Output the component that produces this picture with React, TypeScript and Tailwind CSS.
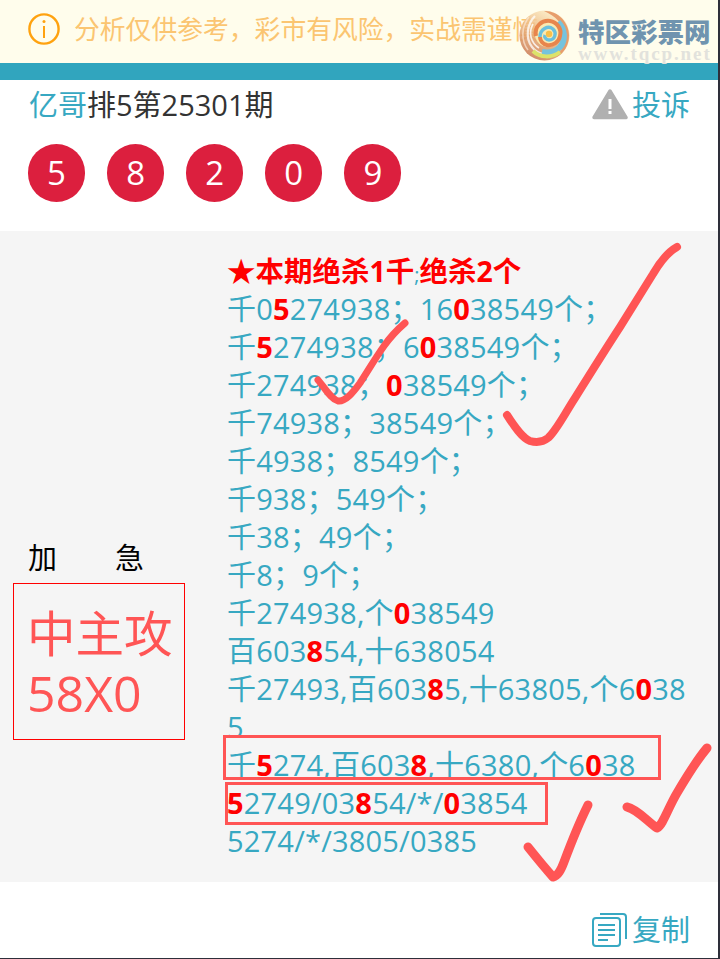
import React from "react";

const font = { fontFamily: '"Open Sans","Noto Sans CJK SC",sans-serif' };
const R = ({ children }: { children: React.ReactNode }) => (
  <b className="font-bold text-[#ff0000]">{children}</b>
);

const Logo = () => (
  <div className="absolute left-[519px] top-[9px] flex gap-[8px]">
    <svg width="51" height="53" viewBox="0 0 51 53" fill="none">
      <defs>
        <linearGradient id="lg1" x1="0.75" y1="0" x2="0.2" y2="1">
          <stop offset="0" stopColor="#fdf3cf" />
          <stop offset="0.45" stopColor="#eebb84" />
          <stop offset="1" stopColor="#c5704c" />
        </linearGradient>
      </defs>
      <circle cx="25.5" cy="26.5" r="25" fill="url(#lg1)" opacity="0.85" />
      <path d="M25 2C38 1 50 13 50 26C50 37 44 45 36 49C43 42 47 34 46 25C45 15 36 7 25 2Z" fill="#e79d6c" />
      <path d="M16 7C8 15 6 29 13 38C19 46 31 48 40 43" stroke="#ffffff" strokeWidth="2.2" opacity="0.75" />
      <path d="M10 8C2 18 2 32 9 41" stroke="#fbe7d4" strokeWidth="1.6" opacity="0.7" />
      <path d="M39 13C46 20 47 31 41 38C36 43 29 44 23 43" stroke="#75c3de" strokeWidth="6" />
      <path d="M14 42C21 49 33 49 41 43" stroke="#dce36a" strokeWidth="4" />
      <circle cx="29" cy="25" r="13" fill="#fbe9b0" />
      <path d="M17 27C15 17 23 11 31 12C38 13 43 20 41 27C40 33 34 37 28 36C24 35 21 32 21 28" stroke="#e8854c" strokeWidth="4" />
      <path d="M21 28C21 20 29 16 34 20C38 24 36 31 30 31C27 31 25 28 26 26" stroke="#6cc0dd" strokeWidth="3.4" />
      <circle cx="30" cy="25" r="3.2" fill="#f9c04a" />
      <path d="M14 15C9 24 12 34 20 39" stroke="#ffffff" strokeWidth="1.6" opacity="0.8" />
    </svg>
    <div className="flex flex-col items-start">
      <span className="mt-[6px] text-[26.5px] leading-[32px] font-black text-[#7094af] whitespace-nowrap" style={{ fontFamily: '"Noto Sans CJK SC",sans-serif' }}>特区彩票网</span>
      <span className="text-[19px] leading-[14px] font-bold tracking-[1.9px] text-[#e2e2dc] whitespace-nowrap" style={{ fontFamily: '"Liberation Serif",serif' }}>www.tqcp.net</span>
    </div>
  </div>
);

export default function App() {
  return (
    <div className="relative h-[959px] w-[720px] overflow-hidden border-r-2 border-b border-[#2e2f3a] bg-white" style={font}>
      <div className="flex h-[63px] items-center gap-[14px] bg-[#fffdec] pl-[28px] pb-[5px]">
        <svg width="32" height="32" viewBox="0 0 32 32" fill="none" stroke="#ffa20f" strokeWidth="2.4">
          <circle cx="16" cy="16" r="14.6" />
          <line x1="16" y1="13" x2="16" y2="25" strokeWidth="2" />
          <circle cx="16" cy="8.5" r="1.5" fill="#ffa20f" stroke="none" />
        </svg>
        <span className="text-[25.8px] text-[#fbc571] whitespace-nowrap">分析仅供参考，彩市有风险，实战需谨慎。</span>
      </div>
      <div className="h-[17px] bg-[#31a5be]" />

      <div className="flex h-[51px] items-center justify-between pb-[2px] pl-[29px] pr-[28px]">
        <div className="text-[29px] leading-[38px] text-[#333333]">
          <span className="text-[#37a8c2]">亿哥</span>排5第25301期
        </div>
        <div className="flex items-center gap-[4px] text-[29px] leading-[38px] text-[#37a8c2]">
          <svg width="36" height="31" viewBox="0 0 36 31">
            <path d="M18 2L34 28.5H2Z" fill="#b0b0b0" stroke="#b0b0b0" strokeWidth="3.4" strokeLinejoin="round" />
            <rect x="16.5" y="10" width="3" height="10" fill="#fff" />
            <rect x="16.5" y="22" width="3" height="3" fill="#fff" />
          </svg>
          投诉
        </div>
      </div>

      <div className="flex h-[100px] gap-[22.1px] pl-[28px] pt-[13px]">
        {["5", "8", "2", "0", "9"].map((n) => (
          <div key={n} className="flex h-[58px] w-[57px] items-center justify-center rounded-full bg-[#dc1f3e] text-[33px] text-white">{n}</div>
        ))}
      </div>

      <div className="flex h-[651px] bg-[#f5f5f5]">
        <div className="w-[227px] shrink-0 pl-[13px] pt-[307px]">
          <div className="flex h-[40px] gap-[58px] pl-[15px] text-[29px] leading-[40px] text-black">
            <span>加</span><span>急</span>
          </div>
          <div className="mt-[5px] h-[157px] w-[172px] border border-[#ff0000] pl-[13px] pt-[19px] text-[48.5px] leading-[60px] text-[#ff5555]">
            中主攻<br /><span className="text-[50px]">58X0</span>
          </div>
        </div>
        <div className="w-[465px] pt-[21px] text-[29px] leading-[38px] tracking-[0.2px] text-[#37a8c2] break-all">
          <div className="h-[38px] text-[28.5px] tracking-normal font-bold text-[#ff0000]">★本期绝杀1千<span className="font-normal text-[#37a8c2] text-[20px]">;</span>绝杀2个</div>
          <div>千0<R>5</R>274938；16<R>0</R>38549个；</div>
          <div>千<R>5</R>274938；6<R>0</R>38549个；</div>
          <div>千274938；<R>0</R>38549个；</div>
          <div>千74938；38549个；</div>
          <div>千4938；8549个；</div>
          <div>千938；549个；</div>
          <div>千38；49个；</div>
          <div>千8；9个；</div>
          <div>千274938,个<R>0</R>38549</div>
          <div>百603<R>8</R>54,十638054</div>
          <div>千27493,百603<R>8</R>5,十63805,个6<R>0</R>385</div>
          <div>千<R>5</R>274,百603<R>8</R>,十6380,个6<R>0</R>38</div>
          <div><R>5</R>2749/03<R>8</R>54/*/<R>0</R>3854</div>
          <div>5274/*/3805/0385</div>
        </div>
      </div>

      <div className="flex h-[76px] items-center justify-end gap-[5px] pr-[28px] pt-[19px] text-[29px] leading-[38px] text-[#37a8c2]">
        <svg width="35" height="35" viewBox="0 0 35 35" fill="none" stroke="#37a8c2" strokeWidth="2">
          <rect x="1" y="6" width="27" height="28" rx="3" />
          <path d="M8 2H31Q34 2 34 5V27" />
          <path d="M6 13H23M6 18H23M6 23H23M6 28H16" />
        </svg>
        复制
      </div>

      <Logo />

      <div className="absolute left-[223px] top-[735px] h-[45px] w-[438px] border-[3px] border-[#ff5555]" />
      <div className="absolute left-[225px] top-[782px] h-[43px] w-[323px] border-[3px] border-[#ff5555]" />

      <svg className="absolute left-0 top-0" width="720" height="959" fill="none" stroke="#ff5555" strokeLinecap="round" strokeLinejoin="round">
        <path strokeWidth="8" d="M507 415C514 426 522 438 530 441C537 443 543 442 548 438C556 431 564 415 575 398C590 374 605 350 620 327C632 308 643 290 653 274C660 262 668 252 677 247" />
        <path strokeWidth="7" d="M318 380C325 388 331 399 338 401C345 402 352 394 360 383C368 371 376 357 384 346C391 336 398 329 405 323" />
        <path strokeWidth="9" d="M528 847C536 857 545 868 553 877C558 876 561 870 564 862C570 846 578 825 588 805" />
        <path strokeWidth="9" d="M627 807C637 809 648 822 657 828C663 825 668 808 677 793C687 776 697 760 707 748" />
      </svg>
    </div>
  );
}
